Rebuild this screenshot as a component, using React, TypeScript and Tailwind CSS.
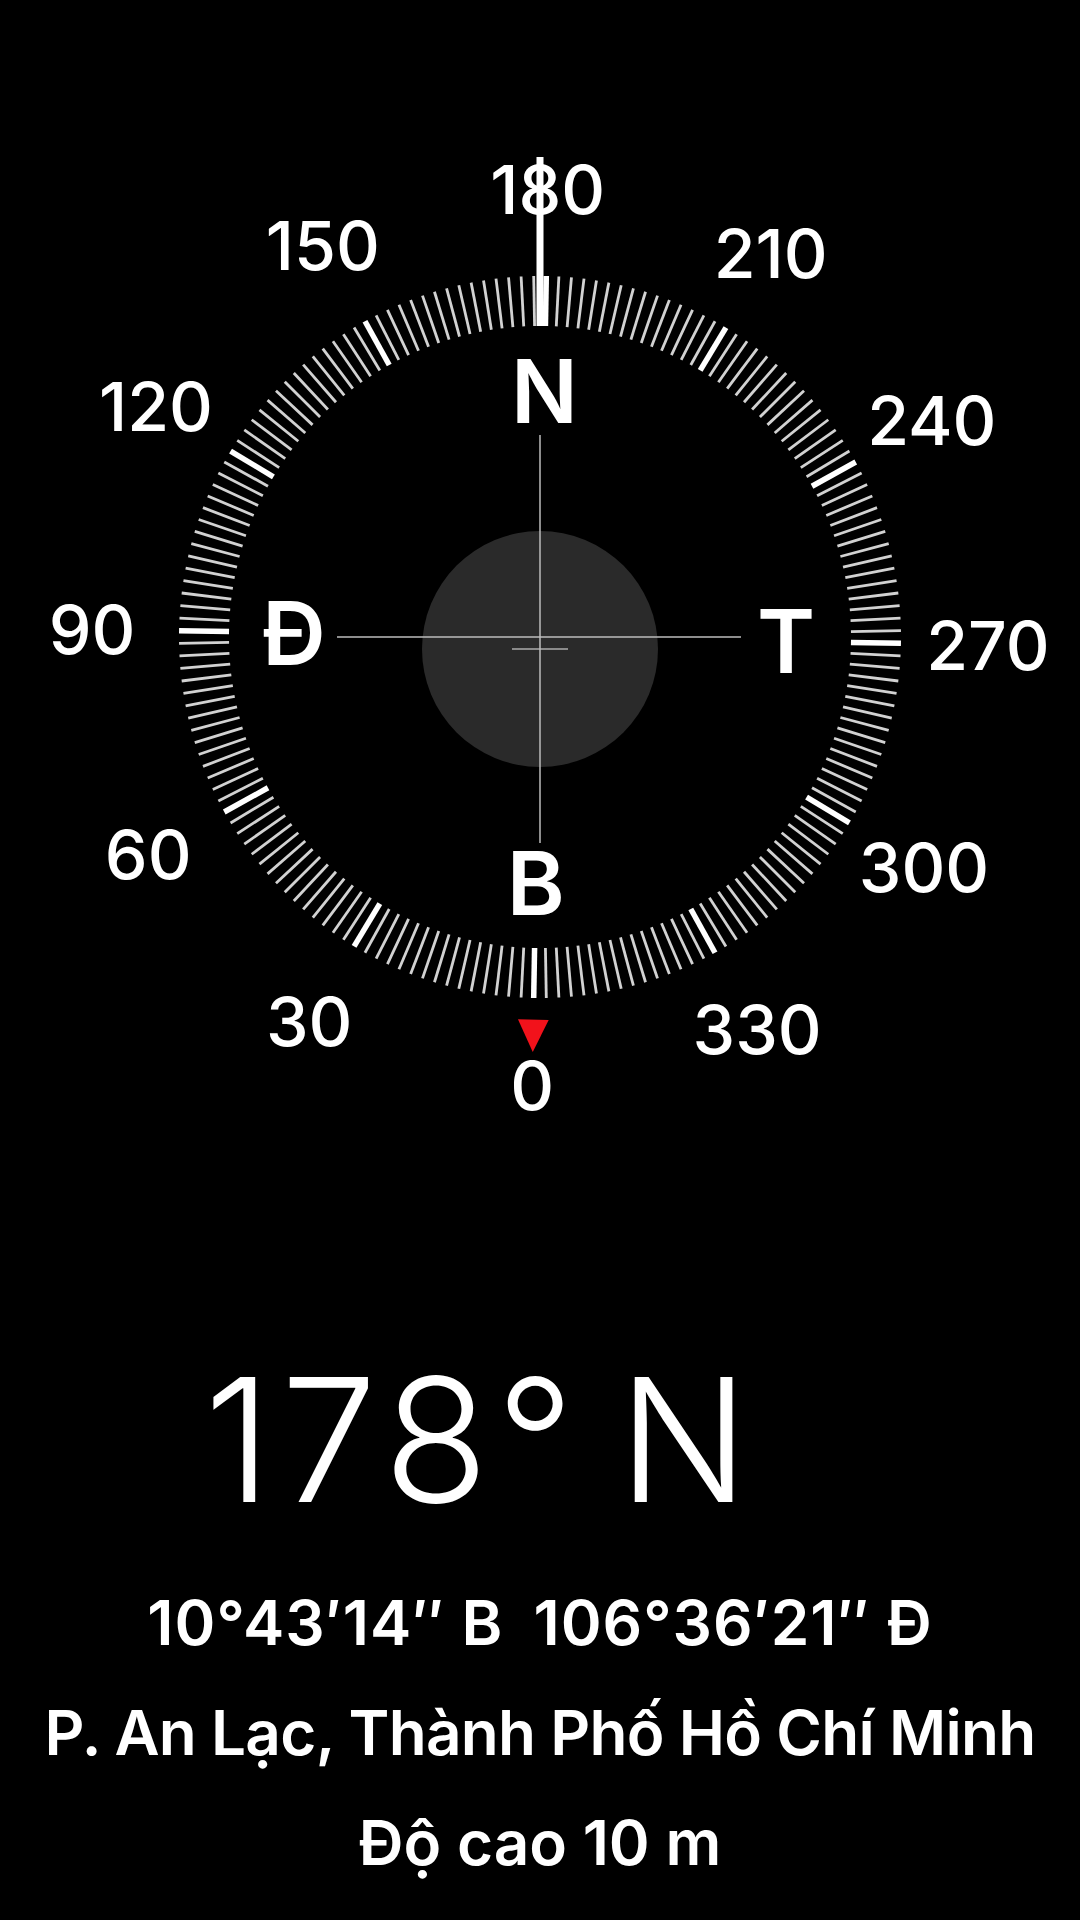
import React from "react";

const CX = 540;
const CY = 637;
const ROT = 179;

function pt(deg: number, r: number) {
  const t = ((deg - ROT) * Math.PI) / 180;
  return { x: CX + r * Math.sin(t), y: CY - r * Math.cos(t) };
}

function Dial() {
  const ticks = Array.from({ length: 180 }, (_, i) => i * 2);
  const labels = [0, 30, 60, 90, 120, 150, 180, 210, 240, 270, 300, 330];
  const cardinals: [string, number][] = [
    ["N", 180],
    ["Đ", 90],
    ["B", 0],
    ["T", 270],
  ];
  const labelSize = 68;
  const cardSize = 88;
  return (
    <svg width={1080} height={1130} viewBox="0 0 1080 1130" className="block shrink-0">
      {/* bubble */}
      <circle cx={540} cy={649} r={118} fill="#2a2a2a" />
      <line x1={512} y1={649} x2={568} y2={649} stroke="#8a8a8a" strokeWidth={2} />
      {/* crosshair */}
      <line x1={337} y1={CY} x2={741} y2={CY} stroke="#bdbdbd" strokeWidth={1.5} />
      <line x1={CX} y1={435} x2={CX} y2={843} stroke="#bdbdbd" strokeWidth={1.5} />
      {/* ticks */}
      {ticks.map((d) => {
        const major = d % 30 === 0;
        const a = pt(d, 311);
        const b = pt(d, 361);
        return (
          <line
            key={d}
            x1={a.x}
            y1={a.y}
            x2={b.x}
            y2={b.y}
            stroke={major ? "#ffffff" : "#d2d2d2"}
            strokeWidth={major ? 5.5 : 2.8}
          />
        );
      })}
      {/* red north marker */}
      {(() => {
        const base1 = pt(0 - 2.3, 383);
        const base2 = pt(0 + 2.3, 383);
        const apex = pt(0, 415);
        return (
          <polygon
            points={`${base1.x},${base1.y} ${base2.x},${base2.y} ${apex.x},${apex.y}`}
            fill="#f2121b"
          />
        );
      })()}
      {/* degree labels */}
      {labels.map((d) => {
        const p = pt(d, 448);
        return (
          <text
            key={d}
            x={p.x}
            y={p.y + labelSize * 0.3635}
            textAnchor="middle"
            fill="#ffffff"
            fontSize={labelSize}
            fontWeight={500}
          >
            {d}
          </text>
        );
      })}
      {/* cardinal letters */}
      {cardinals.map(([l, d]) => {
        const p = pt(d, 246);
        return (
          <text
            key={l}
            x={p.x}
            y={p.y + cardSize * 0.3635}
            textAnchor="middle"
            fill="#ffffff"
            fontSize={cardSize}
            fontWeight={600}
          >
            {l}
          </text>
        );
      })}
      {/* heading needle */}
      <line x1={540} y1={157} x2={540} y2={326} stroke="#ffffff" strokeWidth={7} />
    </svg>
  );
}

export default function App() {
  return (
    <div className="w-[1080px] h-[1920px] bg-black text-white overflow-hidden flex flex-col font-['Inter','Liberation_Sans',sans-serif]">
      <Dial />
      <div className="mt-[223px] pl-[204px] flex text-[172px] leading-none font-light whitespace-nowrap">
        <span className="tracking-[9px]">178°</span>
        <span className="ml-[35px]">N</span>
      </div>
      <div className="mt-[43px] flex flex-col items-center text-[62px] leading-[110px] font-semibold whitespace-nowrap">
        <div className="flex gap-[30px] tracking-[1px]">
          <span>10°43′14″ B</span>
          <span>106°36′21″ Đ</span>
        </div>
        <div className="tracking-[-0.7px]">P. An Lạc, Thành Phố Hồ Chí Minh</div>
        <div>Độ cao 10 m</div>
      </div>
    </div>
  );
}
